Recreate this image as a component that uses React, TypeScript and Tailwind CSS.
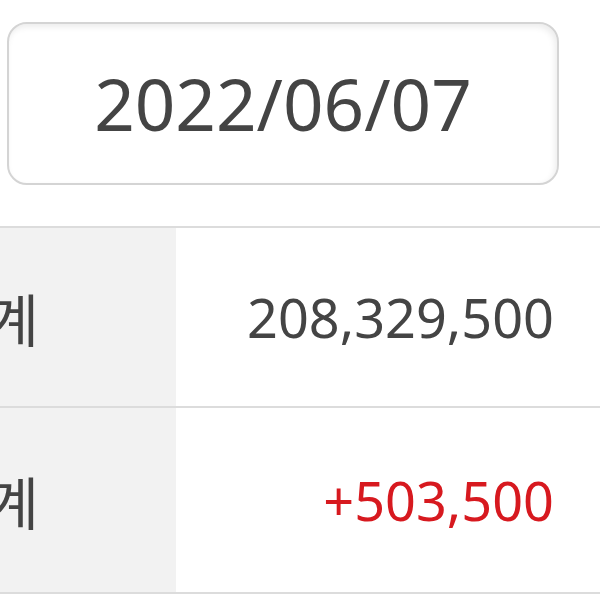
export default function App() {
  const rows = [
    { label: '합계', value: '208,329,500', color: 'text-[#444444]', h: 'h-[180px]' },
    { label: '합계', value: '+503,500', color: 'text-[#d7191f]', h: 'h-[186px]' },
  ]

  return (
    <div className="w-[600px] h-[600px] bg-white overflow-hidden" style={{ fontFamily: '"Noto Sans", "Noto Sans CJK KR", sans-serif' }}>
      {/* Date box */}
      <div className="pt-[22px] pl-[7px]">
        <div className="w-[552px] h-[163px] rounded-[20px] border-2 border-[#d4d4d4] shadow-[inset_-2px_3px_6px_rgba(0,0,0,0.08)] flex items-center justify-center">
          <span className="text-[71px] leading-none text-[#444444]">2022/06/07</span>
        </div>
      </div>

      {/* Summary table */}
      <div className="mt-[41px] border-t-2 border-[#dcdcdc]">
        {rows.map((row, i) => (
          <div key={i} className={`flex ${row.h} border-b-2 border-[#dcdcdc]`}>
            <div className="w-[176px] bg-[#f2f2f2] flex items-center overflow-hidden">
              <span className="ml-[-66px] text-[57px] leading-none text-[#444444] whitespace-nowrap" style={{ fontFamily: '"Noto Sans CJK KR", sans-serif' }}>
                {row.label}
              </span>
            </div>
            <div className="flex-1 flex items-center justify-end pr-[46px]">
              <span className={`text-[54px] leading-none ${row.color}`}>{row.value}</span>
            </div>
          </div>
        ))}
      </div>
    </div>
  )
}
